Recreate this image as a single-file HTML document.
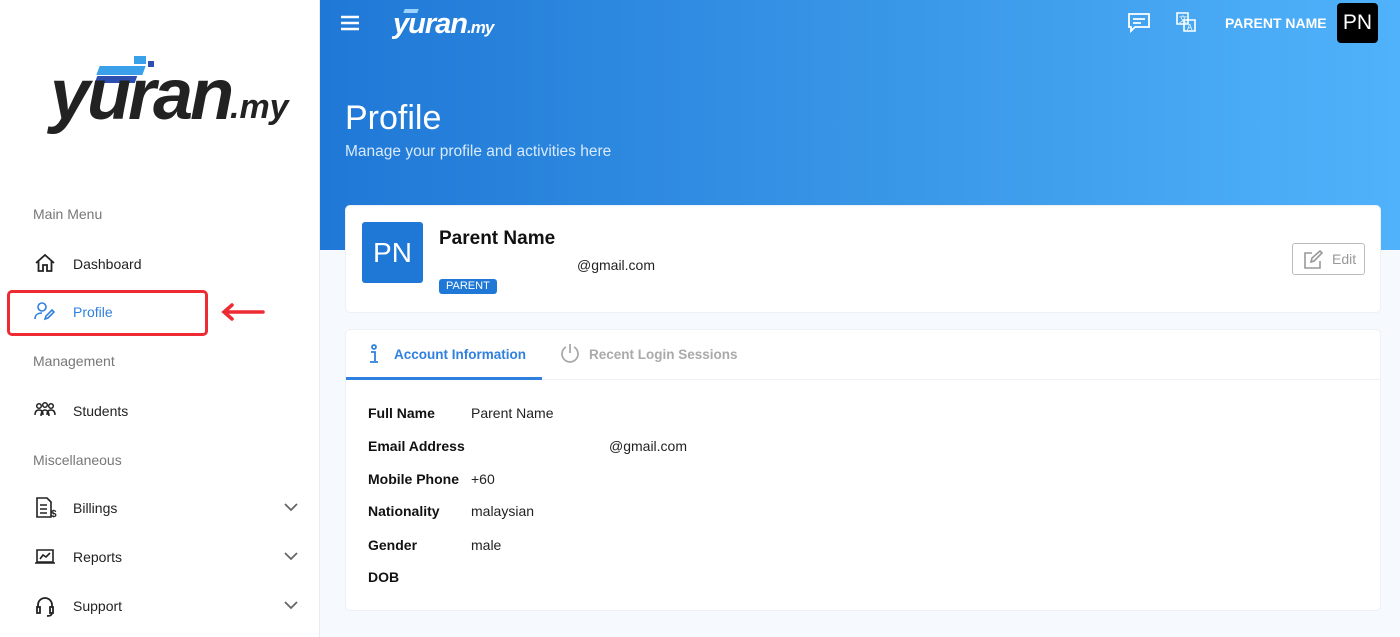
<!DOCTYPE html>
<html><head><meta charset="utf-8"><style>
*{box-sizing:border-box;margin:0;padding:0}
body{width:1400px;height:637px;overflow:hidden;font-family:"Liberation Sans",sans-serif;background:#f6f9fd;position:relative}
.sb{position:absolute;left:0;top:0;width:320px;height:637px;background:#fff;border-right:1px solid #e6ebf2}
.abs{position:absolute}
.sec{position:absolute;left:33px;font-size:14px;color:#777}
.it{position:absolute;left:73px;font-size:14px;color:#222}
.ic{position:absolute;left:34px}
.chev{position:absolute;left:284px}
.band{position:absolute;left:320px;top:0;width:1080px;height:250px;background:linear-gradient(90deg,#1f78d6 0%,#3a98e8 55%,#50b2fb 100%)}
.card{position:absolute;left:345px;width:1036px;background:#fff;border-radius:5px;border:1px solid #edf1f6}
.lb{position:absolute;left:368px;font-size:14px;font-weight:bold;color:#111}
.vl{position:absolute;left:471px;font-size:14px;color:#222}
</style></head><body>
<div class="sb">
 <div class="abs" style="left:50px;top:52px;width:245px;height:80px">
  <div class="abs" style="left:48px;top:14px;width:46px;height:9px;background:#3aa0ea;transform:skewX(-20deg)"></div>
  <div class="abs" style="left:46px;top:24px;width:40px;height:7px;background:#2d4fb0;transform:skewX(-20deg)"></div>
  <div class="abs" style="left:84px;top:4px;width:12px;height:8px;background:#3aa0ea"></div>
  <div class="abs" style="left:98px;top:9px;width:6px;height:6px;background:#2d4fb0"></div>
  <div class="abs" style="left:0;top:8px;font-size:72px;font-weight:bold;font-style:italic;color:#222;letter-spacing:-3px;line-height:70px">yuran</div>
  <div class="abs" style="left:180px;top:36px;font-size:34px;font-weight:bold;font-style:italic;color:#222">.my</div>
 </div>
 <div class="sec" style="top:206px">Main Menu</div>
 <svg class="ic" style="top:253px" width="22" height="20" viewBox="0 0 22 20" fill="none" stroke="#222" stroke-width="1.8"><path d="M2 10L11 2l9 8M4.5 8v10h4.5v-6h4v6h4.5V8"/></svg>
 <div class="it" style="top:256px">Dashboard</div>
 <div class="abs" style="left:7px;top:290px;width:201px;height:46px;border:3px solid #ee2a33;border-radius:5px"></div>
 <svg class="ic" style="top:301px" width="22" height="20" viewBox="0 0 22 20" fill="none" stroke="#2f80df" stroke-width="1.6"><circle cx="8" cy="6" r="4"/><path d="M1 18c0-4 3-6 7-6M11 18l1-3 6-6 2 2-6 6z"/></svg>
 <div class="it" style="top:304px;color:#2f80df">Profile</div>
 <svg class="abs" style="left:219px;top:302px" width="46" height="20" viewBox="0 0 46 20"><path d="M44 10H6M13 3L5 10l8 7" stroke="#ee2a33" stroke-width="3.5" fill="none" stroke-linecap="round"/></svg>
 <div class="sec" style="top:353px">Management</div>
 <svg class="ic" style="top:401px" width="22" height="18" viewBox="0 0 22 18" fill="none" stroke="#222" stroke-width="1.5"><circle cx="5" cy="5" r="2.3"/><circle cx="11" cy="4" r="2.3"/><circle cx="17" cy="5" r="2.3"/><path d="M1 14c0-4 2-5 4-5s4 1 4 5M7 15c0-4 2-6 4-6s4 2 4 6M13 14c0-4 2-5 4-5s4 1 4 5"/></svg>
 <div class="it" style="top:403px">Students</div>
 <div class="sec" style="top:452px">Miscellaneous</div>
 <svg class="ic" style="top:497px" width="24" height="22" viewBox="0 0 24 22" fill="none" stroke="#222" stroke-width="1.6"><path d="M3 1h10l4 4v15H3zM6 8h7M6 12h7M6 16h7"/><text x="17" y="20" font-size="10" fill="#222" stroke="none" font-family="Liberation Sans" font-weight="bold">$</text></svg>
 <div class="it" style="top:500px">Billings</div>
 <svg class="ic" style="top:548px" width="22" height="18" viewBox="0 0 22 18" fill="none" stroke="#222" stroke-width="1.6"><path d="M3 2h16v12H3zM1 15h20M6 11l3-4 3 2 4-4"/></svg>
 <div class="it" style="top:549px">Reports</div>
 <svg class="ic" style="top:595px" width="22" height="22" viewBox="0 0 22 22" fill="none" stroke="#222" stroke-width="1.8"><path d="M4 12V10a7 7 0 0114 0v2M3 12h3v6H3zM16 12h3v6h-3zM18 18c0 2-2 3-5 3"/></svg>
 <div class="it" style="top:598px">Support</div>
 <svg class="chev" style="top:502px" width="14" height="10" viewBox="0 0 14 10"><path d="M1 2l6 6 6-6" stroke="#666" stroke-width="1.8" fill="none"/></svg>
 <svg class="chev" style="top:551px" width="14" height="10" viewBox="0 0 14 10"><path d="M1 2l6 6 6-6" stroke="#666" stroke-width="1.8" fill="none"/></svg>
 <svg class="chev" style="top:600px" width="14" height="10" viewBox="0 0 14 10"><path d="M1 2l6 6 6-6" stroke="#666" stroke-width="1.8" fill="none"/></svg>
</div>
<div class="band"></div>
<svg class="abs" style="left:340px;top:15px" width="20" height="16" viewBox="0 0 20 16"><path d="M1 2h18M1 8h18M1 14h18" stroke="#fff" stroke-width="2.4"/></svg>
<div class="abs" style="left:393px;top:8px;color:#fff;font-size:29px;font-weight:bold;font-style:italic;letter-spacing:-1px">yuran<span style="font-size:17px">.my</span></div>
<div class="abs" style="left:404px;top:9px;width:14px;height:4px;background:#9bd3ff;transform:skewX(-20deg)"></div>
<svg class="abs" style="left:1127px;top:12px" width="24" height="22" viewBox="0 0 24 22" fill="none" stroke="#fff" stroke-width="1.8"><path d="M2 2h20v13H8l-4 4v-4H2z"/><path d="M6 7h12M6 11h8"/></svg>
<svg class="abs" style="left:1175px;top:11px" width="22" height="22" viewBox="0 0 22 22" fill="none" stroke="#fff" stroke-width="1.6"><path d="M2 2h11v11H2zM9 9h11v11H9z"/><text x="4" y="11" font-size="8" fill="#fff" stroke="none">文</text><text x="12" y="19" font-size="8" fill="#fff" stroke="none">A</text></svg>
<div class="abs" style="left:1225px;top:15px;color:#fff;font-size:14px;font-weight:bold">PARENT NAME</div>
<div class="abs" style="left:1337px;top:3px;width:41px;height:40px;background:#000;border-radius:4px;color:#fff;font-size:21px;line-height:40px;text-align:center">PN</div>
<div class="abs" style="left:345px;top:99px;color:#fff;font-size:34px">Profile</div>
<div class="abs" style="left:345px;top:143px;color:#d8eafc;font-size:15.5px">Manage your profile and activities here</div>
<div class="card" style="top:205px;height:108px">
 <div class="abs" style="left:16px;top:16px;width:61px;height:61px;background:#1f78d6;border-radius:3px;color:#fff;font-size:28px;line-height:61px;text-align:center">PN</div>
 <div class="abs" style="left:93px;top:22px;font-size:19px;font-weight:bold;color:#111">Parent Name</div>
 <div class="abs" style="left:231px;top:51px;font-size:14px;color:#222">@gmail.com</div>
 <div class="abs" style="left:93px;top:73px;background:#1f78d6;color:#fff;font-size:11px;padding:1px 7px;border-radius:3px;line-height:13px">PARENT</div>
 <div class="abs" style="left:946px;top:37px;width:73px;height:32px;border:1px solid #bbb;border-radius:3px"></div>
 <svg class="abs" style="left:957px;top:44px" width="20" height="19" viewBox="0 0 20 19" fill="none" stroke="#999" stroke-width="1.6"><path d="M9 3H2v15h15v-7M8 12l1-4 8-7 2 2-8 8z"/></svg>
 <div class="abs" style="left:986px;top:45px;font-size:14px;color:#999">Edit</div>
</div>
<div class="card" style="top:329px;height:282px">
 <div class="abs" style="left:0;top:49px;width:1034px;height:1px;background:#edf1f6"></div>
 <div class="abs" style="left:0;top:47px;width:196px;height:3px;background:#2f80df"></div>
 <svg class="abs" style="left:22px;top:14px" width="12" height="20" viewBox="0 0 12 20" fill="none" stroke="#2f80df" stroke-width="1.8"><circle cx="6" cy="3" r="2"/><path d="M3 8h4v9M2 18h8"/></svg>
 <div class="abs" style="left:48px;top:17px;font-size:13.5px;font-weight:bold;color:#2f80df">Account Information</div>
 <svg class="abs" style="left:213px;top:13px" width="22" height="22" viewBox="0 0 22 22" fill="none" stroke="#aaa" stroke-width="1.8"><path d="M7 4a8 8 0 108 0M11 1v9"/></svg>
 <div class="abs" style="left:243px;top:17px;font-size:13.5px;font-weight:bold;color:#aaa">Recent Login Sessions</div>
</div>
<div class="lb" style="top:405px">Full Name</div><div class="vl" style="top:405px">Parent Name</div>
<div class="lb" style="top:438px">Email Address</div><div class="vl" style="top:438px;left:609px">@gmail.com</div>
<div class="lb" style="top:471px">Mobile Phone</div><div class="vl" style="top:471px">+60</div>
<div class="lb" style="top:503px">Nationality</div><div class="vl" style="top:503px">malaysian</div>
<div class="lb" style="top:537px">Gender</div><div class="vl" style="top:537px">male</div>
<div class="lb" style="top:569px">DOB</div>
</body></html>
